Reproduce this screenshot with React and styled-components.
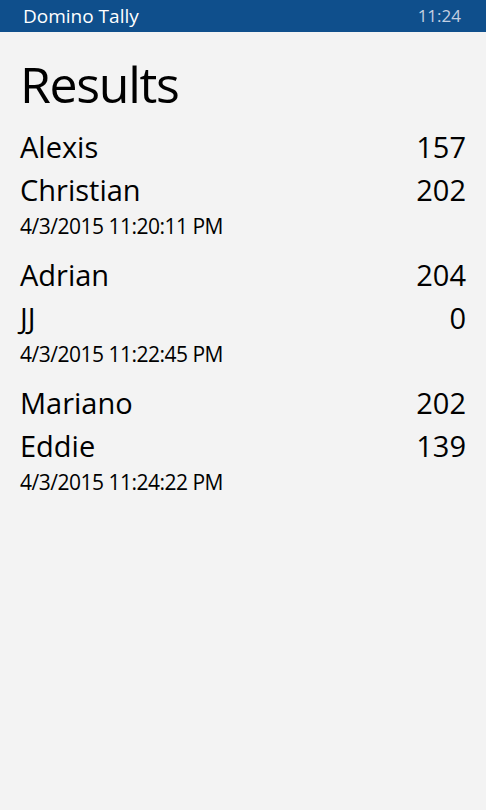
import React from "react";
import styled, { createGlobalStyle } from "styled-components";

const GlobalStyle = createGlobalStyle`
  html, body {
    margin: 0;
    padding: 0;
    background: #f3f3f3;
  }
  body {
    font-family: "Open Sans", "Noto Sans", sans-serif;
    color: #000;
  }
`;

const games = [
  {
    players: [
      { name: "Alexis", score: 157 },
      { name: "Christian", score: 202 },
    ],
    date: "4/3/2015 11:20:11 PM",
  },
  {
    players: [
      { name: "Adrian", score: 204 },
      { name: "JJ", score: 0 },
    ],
    date: "4/3/2015 11:22:45 PM",
  },
  {
    players: [
      { name: "Mariano", score: 202 },
      { name: "Eddie", score: 139 },
    ],
    date: "4/3/2015 11:24:22 PM",
  },
];

const App = () => {
  return (
    <StPage>
      <GlobalStyle />
      <StStatusBar>
        <StAppName>Domino Tally</StAppName>
        <StClock>11:24</StClock>
      </StStatusBar>
      <StContent>
        <StTitle>Results</StTitle>
        <StList>
          {games.map((game) => (
            <StGame key={game.date}>
              {game.players.map((p) => (
                <StRow key={p.name}>
                  <span>{p.name}</span>
                  <span>{p.score}</span>
                </StRow>
              ))}
              <StDate>{game.date}</StDate>
            </StGame>
          ))}
        </StList>
      </StContent>
    </StPage>
  );
};

const StPage = styled.div`
  width: 100%;
  min-height: 810px;
  background: #f3f3f3;
`;

const StStatusBar = styled.div`
  height: 32px;
  background: #0f4f8c;
  color: #ffffff;
  display: flex;
  justify-content: space-between;
  align-items: center;
  padding: 0 25px 0 23px;
  line-height: 32px;
  box-sizing: border-box;
`;

const StAppName = styled.span`
  font-size: 19px;
`;

const StClock = styled.span`
  font-size: 17px;
  color: #c3cfe2;
`;

const StContent = styled.div`
  padding: 22px 20px 0 20px;
`;

const StTitle = styled.h1`
  margin: 0;
  font-size: 50px;
  font-weight: 400;
  line-height: 60px;
  letter-spacing: -1.3px;
`;

const StList = styled.div`
  display: flex;
  flex-direction: column;
  gap: 12px;
  margin-top: 11px;
`;

const StGame = styled.div`
  display: flex;
  flex-direction: column;
`;

const StRow = styled.div`
  display: flex;
  justify-content: space-between;
  font-size: 29px;
  line-height: 43px;
`;

const StDate = styled.div`
  font-size: 21px;
  line-height: 30px;
  letter-spacing: -0.5px;
`;

export default App;
